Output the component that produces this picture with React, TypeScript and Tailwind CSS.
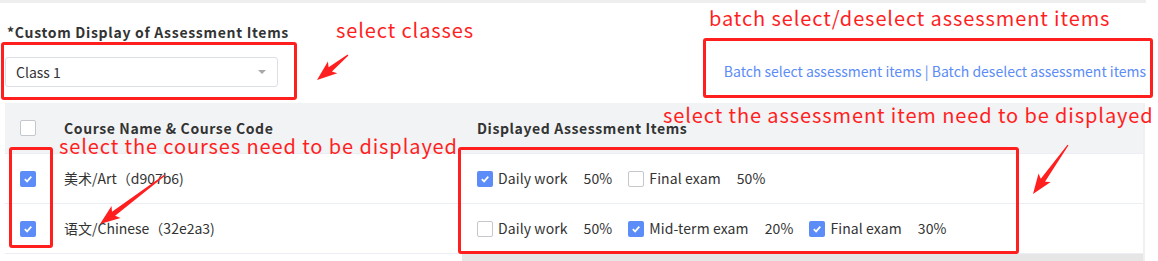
type Pt = [number, number];

// tapered screenshot-tool style arrow, from tail to tip
function arrowPoints(tail: Pt, tip: Pt) {
  const dx = tip[0] - tail[0];
  const dy = tip[1] - tail[1];
  const len = Math.hypot(dx, dy);
  const ux = dx / len;
  const uy = dy / len;
  const nx = -uy;
  const ny = ux;
  const head = 17;
  const base: Pt = [tip[0] - ux * head, tip[1] - uy * head];
  const barb: Pt = [tip[0] - ux * (head + 3), tip[1] - uy * (head + 3)];
  const p = (a: Pt, k: number) =>
    `${(a[0] + nx * k).toFixed(1)},${(a[1] + ny * k).toFixed(1)}`;
  return [
    p(tail, 0.6),
    p(base, 2.6),
    p(barb, 7.5),
    p(tip, 0),
    p(barb, -7.5),
    p(base, -2.6),
    p(tail, -0.6),
  ].join(" ");
}

function Checkbox({ checked }: { checked?: boolean }) {
  if (checked) {
    return (
      <span className="flex h-[16px] w-[16px] shrink-0 items-center justify-center rounded-[2px] bg-[#5b8cf7]">
        <svg width="10" height="10" viewBox="0 0 10 10">
          <path d="M1.8 5.2 L4.1 7.4 L8.3 2.6" fill="none" stroke="#fff" strokeWidth="1.7" />
        </svg>
      </span>
    );
  }
  return <span className="h-[16px] w-[16px] shrink-0 rounded-[2px] border border-[#c4c7cc] bg-white" />;
}

type Item = { label: string; pct: string; checked: boolean };

const rows: { name: string; checked: boolean; items: Item[] }[] = [
  {
    name: "美术/Art（d907b6)",
    checked: true,
    items: [
      { label: "Daily work", pct: "50%", checked: true },
      { label: "Final exam", pct: "50%", checked: false },
    ],
  },
  {
    name: "语文/Chinese（32e2a3)",
    checked: true,
    items: [
      { label: "Daily work", pct: "50%", checked: false },
      { label: "Mid-term exam", pct: "20%", checked: true },
      { label: "Final exam", pct: "30%", checked: true },
    ],
  },
];

const redBox = "absolute rounded-[3px] border-[3px] border-[#ff1f1f]";
const redText =
  "absolute whitespace-nowrap text-[20px] leading-[24px] tracking-[0.9px] text-[#ff1f1f]";

export default function App() {
  return (
    <div className="relative h-[261px] w-[1158px] overflow-hidden bg-white font-['Noto_Sans_CJK_SC','Noto_Sans',sans-serif] text-[#333]">
      <div className="h-[3px] w-[1146px] bg-[#eeeeee]" />

      <div className="flex w-[1146px] items-start justify-between">
        <div className="pl-[5px] pt-[19px]">
          <div className="pl-[2px] text-[14px] font-bold leading-[20px] tracking-[0.7px]">
            *Custom Display of Assessment Items
          </div>
          <div className="mt-[15px] flex h-[30px] w-[273px] items-center justify-between rounded-[3px] border border-[#dcdfe6] pl-[10px] pr-[10px] text-[14px]">
            <span>Class 1</span>
            <svg width="10" height="6" viewBox="0 0 10 6">
              <path d="M1 1 L9 1 L5 5 Z" fill="#a8a8a8" />
            </svg>
          </div>
        </div>
        <div className="whitespace-nowrap pt-[58px] text-[14px] leading-[20px] text-[#5b8cf7]">
          Batch select assessment items | Batch deselect assessment items
        </div>
      </div>

      <div className="relative ml-[5px] mt-[16px] w-[1140px] border-r-2 border-[#f0f0f0] text-[14px]">
        <div className="flex h-[50px] items-center bg-[#f2f3f5] font-bold tracking-[0.6px]">
          <div className="flex w-[46px] justify-center">
            <Checkbox />
          </div>
          <div className="w-[411px] pl-[13px]">Course Name &amp; Course Code</div>
          <div className="flex-1 pl-[15px]">Displayed Assessment Items</div>
        </div>
        {rows.map((r) => (
          <div key={r.name} className="flex h-[50px] items-center border-t border-[#ebeef5]">
            <div className="flex w-[46px] justify-center">
              <Checkbox checked={r.checked} />
            </div>
            <div className="w-[411px] pl-[13px]">{r.name}</div>
            <div className="flex flex-1 items-center pl-[15px] tracking-[0.1px]">
              {r.items.map((it) => (
                <div key={it.label} className="mr-[16px] flex items-center">
                  <Checkbox checked={it.checked} />
                  <span className="ml-[5px]">{it.label}</span>
                  <span className="ml-[16px]">{it.pct}</span>
                </div>
              ))}
            </div>
          </div>
        ))}
        <div className="flex h-[8px] border-t border-[#ebeef5]">
          <div className="w-[457px]" />
          <div className="flex-1 bg-[#e6e6e6]" />
        </div>
      </div>

      {/* annotations */}
      <div className={`${redBox} left-[1px] top-[42px] h-[58px] w-[296px]`} />
      <div className={`${redBox} left-[703px] top-[38px] h-[60px] w-[450px]`} />
      <div className={`${redBox} left-[9px] top-[147px] h-[101px] w-[44px]`} />
      <div className={`${redBox} left-[458px] top-[147px] h-[107px] w-[561px]`} />

      <div className={`${redText} left-[336px] top-[18px]`}>select classes</div>
      <div className={`${redText} left-[709px] top-[6px]`}>batch select/deselect assessment items</div>
      <div className={`${redText} left-[59px] top-[134px]`}>select the courses need to be displayed</div>
      <div className={`${redText} left-[663px] top-[103px]`}>select the assessment item need to be displayed</div>

      <svg className="pointer-events-none absolute left-0 top-0" width="1158" height="261">
        <polygon points={arrowPoints([348, 55], [317, 80])} fill="#ff1f1f" />
        <polygon points={arrowPoints([165, 175], [100, 224])} fill="#ff1f1f" />
        <polygon points={arrowPoints([1068, 145], [1033, 194])} fill="#ff1f1f" />
      </svg>
    </div>
  );
}
